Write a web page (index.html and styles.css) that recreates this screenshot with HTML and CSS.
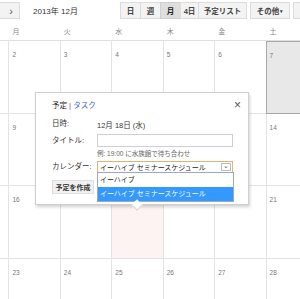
FILE: index.html
```html
<!DOCTYPE html>
<html lang="ja">
<head>
<meta charset="utf-8">
<link rel="stylesheet" href="styles.css">
</head>
<body>
<div class="toolbar">
  <span class="btn nav-btn">&#8250;</span>
  <span class="title">2013年 12月</span>
  <div class="views">
    <span class="btn seg w20">日</span><span class="btn seg w20">週</span><span class="btn seg w21 active">月</span><span class="btn seg w19">4日</span><span class="btn seg w48">予定リスト</span>
  </div>
  <span class="btn more">その他 <span class="caret">&#9662;</span></span>
  <span class="btn extra"></span>
</div>

<div class="dow">
  <span></span><span>月</span><span>火</span><span>水</span><span>木</span><span>金</span><span>土</span>
</div>

<div class="grid">
  <div class="cell"></div>
  <div class="cell"><span class="num">2</span></div>
  <div class="cell"><span class="num">3</span></div>
  <div class="cell"><span class="num">4</span></div>
  <div class="cell"><span class="num">5</span></div>
  <div class="cell"><span class="num">6</span></div>
  <div class="cell selected"><span class="num">7</span></div>

  <div class="cell"></div>
  <div class="cell"><span class="num">9</span></div>
  <div class="cell"></div>
  <div class="cell"></div>
  <div class="cell"></div>
  <div class="cell"></div>
  <div class="cell"><span class="num">14</span></div>

  <div class="cell"></div>
  <div class="cell"><span class="num">16</span></div>
  <div class="cell"></div>
  <div class="cell today"></div>
  <div class="cell"></div>
  <div class="cell"></div>
  <div class="cell"><span class="num">21</span></div>

  <div class="cell"></div>
  <div class="cell"><span class="num">23</span></div>
  <div class="cell"><span class="num">24</span></div>
  <div class="cell"><span class="num">25</span></div>
  <div class="cell"><span class="num">26</span></div>
  <div class="cell"><span class="num">27</span></div>
  <div class="cell"><span class="num">28</span></div>
</div>

<div class="popup">
  <div class="tabs"><span class="tab-on">予定</span> <span class="sep">|</span> <span class="tab-link">タスク</span></div>
  <span class="close">&#215;</span>
  <div class="form">
    <div class="label">日時:</div>
    <div class="value">12月 18日 (水)</div>

    <div class="label lbl-title">タイトル:</div>
    <div class="value"><div class="input"></div></div>

    <div></div>
    <div class="hint">例: 19:00 に水族館で待ち合わせ</div>

    <div class="label lbl-cal">カレンダー:</div>
    <div class="value">
      <div class="select"><span class="sel-text">イーハイブ セミナースケジュール</span><span class="sel-arrow">&#8964;</span></div>
    </div>
  </div>
  <div class="actions"><span class="create">予定を作成</span></div>

  <div class="options">
    <div class="opt">イーハイブ</div>
    <div class="opt opt-on">イーハイブ セミナースケジュール</div>
  </div>
  <span class="notch"></span>
</div>
</body>
</html>
```

FILE: styles.css
```css
* { box-sizing: border-box; }
html, body { margin: 0; padding: 0; }
body {
  width: 300px;
  height: 299px;
  overflow: hidden;
  background: #fff;
  position: relative;
  font-family: "Liberation Sans", "Noto Sans CJK JP", sans-serif;
  color: #222;
}

/* toolbar */
.toolbar {
  display: flex;
  align-items: center;
  height: 21px;
  white-space: nowrap;
  overflow: hidden;
}
.toolbar > * { flex-shrink: 0; }
.btn {
  display: inline-flex;
  align-items: center;
  justify-content: center;
  flex-shrink: 0;
  height: 17px;
  background: #f3f3f3;
  border: 1px solid #dcdcdc;
  font-size: 7.5px;
  font-weight: bold;
  color: #444;
}
.nav-btn {
  width: 24px;
  margin-left: -4px;
  font-size: 11px;
  font-weight: normal;
  color: #555;
  padding-left: 6px;
}
.title {
  margin-left: 13px;
  width: 87px;
  font-size: 8px;
  color: #333;
}
.views { display: flex; }
.seg { margin-right: -1px; }
.w20 { width: 21px; }
.w21 { width: 21px; }
.w19 { width: 19px; }
.w48 { width: 49px; }
.seg.active { background: #dedede; border-color: #cfcfcf; color: #222; }
.more { width: 40px; margin-left: 4px; }
.caret { font-size: 5px; margin-left: 1px; }
.extra { width: 20px; margin-left: 3px; }

/* day of week */
.dow {
  display: grid;
  grid-template-columns: repeat(7, 1fr);
  width: 360px;
  margin-left: -43px;
  height: 19px;
  align-items: center;
  font-size: 7px;
  color: #888;
}
.dow span { padding-left: 4px; }

/* grid */
.grid {
  display: grid;
  grid-template-columns: repeat(7, 1fr);
  grid-auto-rows: 72.5px;
  width: 360px;
  margin-left: -43px;
  border-top: 1px solid #e0e0e0;
}
.cell {
  border-left: 1px solid #e3e3e3;
  border-bottom: 1px solid #e3e3e3;
  padding: 2px 3px;
}
.num { font-size: 6.5px; color: #777; }
.cell.selected {
  background: #e8e8e8;
  border: 1px solid #a8a8a8;
}
.cell.today { background: #fdf3f3; }

/* popup */
.popup {
  position: absolute;
  left: 35px;
  top: 92px;
  width: 214px;
  height: 113px;
  background: #fff;
  border: 1px solid #cfcfcf;
  box-shadow: 1px 2px 3px rgba(0,0,0,0.18);
  padding: 7px 15px 0 16px;
  font-size: 7.5px;
  color: #222;
}
.tabs { height: 12px; line-height: 12px; font-size: 7.5px; }
.tab-on { color: #222; }
.sep { color: #8a3aa8; }
.tab-link { color: #3b5fd0; }
.close {
  position: absolute;
  right: 7px;
  top: 5px;
  font-size: 12px;
  color: #555;
  line-height: 14px;
}
.form {
  display: grid;
  grid-template-columns: 45px 136px;
  align-items: center;
  margin-top: 6px;
}
.label { color: #333; height: 12px; line-height: 12px; }
.value { color: #333; }
.lbl-title { margin-top: 4px; }
.input {
  margin-top: 4px;
  height: 13px;
  border: 1px solid #cfcfcf;
  background: #fff;
}
.hint {
  font-size: 6.5px;
  color: #666;
  height: 12px;
  line-height: 12px;
  margin-top: 1px;
}
.lbl-cal { margin-top: 1px; }
.select {
  margin-top: 1px;
  height: 12px;
  border: 1px solid #dcb46e;
  display: flex;
  align-items: center;
  justify-content: space-between;
  padding-left: 2px;
  background: #fff;
}
.sel-text { font-size: 7px; color: #222; white-space: nowrap; }
.sel-arrow {
  width: 10px;
  height: 8px;
  margin-right: 1px;
  border: 1px solid #bcbcbc;
  font-size: 7px;
  line-height: 4px;
  text-align: center;
  color: #555;
}
.actions { margin-top: 7px; }
.create {
  display: inline-flex;
  align-items: center;
  justify-content: center;
  width: 42px;
  height: 14px;
  background: #f1f1f1;
  border: 1px solid #dedede;
  font-size: 7px;
  font-weight: bold;
  color: #333;
}
.options {
  position: absolute;
  left: 61px;
  top: 79px;
  width: 137px;
  border: 1px solid #9aa9c0;
  background: #fff;
  font-size: 7px;
}
.opt { height: 14px; line-height: 14px; padding-left: 2px; color: #222; white-space: nowrap; }
.opt-on { background: #3399ff; color: #fff; }
.notch {
  position: absolute;
  left: 97px;
  bottom: -5px;
  width: 8px;
  height: 8px;
  background: #fff;
  border-right: 1px solid #d8d8d8;
  border-bottom: 1px solid #d8d8d8;
  transform: rotate(45deg);
}
```
